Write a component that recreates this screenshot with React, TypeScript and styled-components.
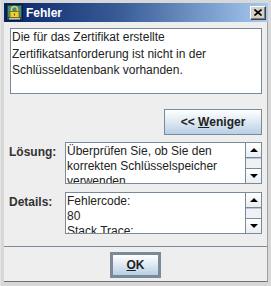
import React from 'react';
import styled, { createGlobalStyle } from 'styled-components';

const Global = createGlobalStyle`
  html, body { margin: 0; padding: 0; background: #d4d4d4; }
  body { font-family: "Liberation Sans", Arial, sans-serif; font-size: 12px; }
  * { box-sizing: border-box; }
`;

const Window = styled.div`
  width: 271px;
  height: 286px;
  background: #d8d8d8;
  padding: 3px 3px 4px 3px;
  display: flex;
  flex-direction: column;
  border-left: 1px solid #e4e4e4;
`;

const TitleBar = styled.div`
  height: 19px;
  background: linear-gradient(to right, #0a246a 0%, #3a5e98 45%, #a6caf0 100%);
  display: flex;
  align-items: center;
  padding: 0 2px 0 2px;
  gap: 3px;
`;

const Title = styled.span`
  color: #fff;
  font-weight: bold;
  font-size: 12px;
  flex: 1;
`;

const CloseButton = styled.div`
  width: 16px;
  height: 14px;
  background: #d4d0c8;
  border-top: 1px solid #fff;
  border-left: 1px solid #fff;
  border-right: 1px solid #404040;
  border-bottom: 1px solid #404040;
  box-shadow: inset -1px -1px 0 #808080;
  display: flex;
  align-items: center;
  justify-content: center;
`;

const Body = styled.div`
  flex: 1;
  background: #eeeeee;
  display: flex;
  flex-direction: column;
  border-right: 1px solid #a0a0a0;
  border-bottom: 1px solid #707070;
  padding-top: 6px;
`;

const Inner = styled.div`
  display: flex;
  flex-direction: column;
  padding: 0 5px 0 6px;
`;

const MessageBox = styled.div`
  height: 66px;
  background: #fff;
  border: 1px solid #7a8a99;
  padding: 0 1px;
  color: #222;
  font-size: 12px;
  line-height: 16.5px;
`;

const ToggleRow = styled.div`
  display: flex;
  justify-content: flex-end;
  margin-top: 15px;
`;

const Button = styled.div<{ $default?: boolean; $w: number }>`
  width: ${(p) => p.$w}px;
  height: 26px;
  border: ${(p) => (p.$default ? '3px' : '1px')} solid #7a8a99;
  background: linear-gradient(to bottom, #ffffff 0%, #e4edf6 40%, #b8cfe5 100%);
  display: flex;
  align-items: center;
  justify-content: center;
  font-weight: bold;
  font-size: 12px;
  color: #222;
`;

const Mnemonic = styled.span`
  text-decoration: underline;
`;

const DetailGrid = styled.div`
  display: grid;
  grid-template-columns: 55px 1fr;
  row-gap: 8px;
  margin-top: 7px;
`;

const Label = styled.div`
  font-weight: bold;
  color: #333;
  padding-top: 3px;
  padding-left: 0;
  margin-left: -1px;
`;

const TextPane = styled.div`
  height: 42px;
  border: 1px solid #7a8a99;
  background: #fff;
  display: flex;
`;

const PaneText = styled.div`
  flex: 1;
  overflow: hidden;
  padding: 1px 2px 0 1px;
  line-height: 15px;
  color: #222;
`;

const ScrollBar = styled.div`
  width: 16px;
  border-left: 1px solid #7a8a99;
  display: flex;
  flex-direction: column;
  background: #eeeeee;
`;

const ArrowButton = styled.div`
  height: 15px;
  background: linear-gradient(to bottom, #ffffff, #e8eef4);
  display: flex;
  align-items: center;
  justify-content: center;
  border-bottom: 1px solid #7a8a99;
  &:last-child {
    border-bottom: none;
    border-top: 1px solid #7a8a99;
  }
`;

const Thumb = styled.div`
  flex: 1;
  background: #eef2f6;
  border-top: 1px solid #b8c8d8;
`;

const Separator = styled.div`
  height: 1px;
  background: #7a8a99;
  margin-top: 12px;
`;

const Footer = styled.div`
  display: flex;
  justify-content: center;
  margin-top: 5px;
`;

const LockIcon = () => (
  <svg width="17" height="17" viewBox="0 0 17 17">
    <rect x="0.5" y="0.5" width="16" height="16" fill="#1d4e5e" stroke="#101830" />
    <rect x="2" y="2" width="13" height="11" fill="#3f8f7f" />
    <path d="M5.5 8 V5.5 a3 3 0 0 1 6 0 V8" fill="none" stroke="#e0d060" strokeWidth="1.6" />
    <rect x="4" y="7.5" width="9" height="6" fill="#f0d030" stroke="#806010" strokeWidth="0.8" />
    <rect x="8" y="9.5" width="1" height="2" fill="#604000" />
    <rect x="3" y="14" width="11" height="1.5" fill="#c0c0c0" />
  </svg>
);

const CloseX = () => (
  <svg width="8" height="7" viewBox="0 0 8 7">
    <path d="M0.5 0.5 L7.5 6.5 M7.5 0.5 L0.5 6.5" stroke="#000" strokeWidth="1.6" />
  </svg>
);

const UpArrow = () => (
  <svg width="8" height="4" viewBox="0 0 8 4">
    <path d="M0 4 L4 0 L8 4 Z" fill="#000" />
  </svg>
);

const DownArrow = () => (
  <svg width="8" height="4" viewBox="0 0 8 4">
    <path d="M0 0 L8 0 L4 4 Z" fill="#000" />
  </svg>
);

const Pane: React.FC<{ lines: string[] }> = ({ lines }) => (
  <TextPane>
    <PaneText>
      {lines.map((l, i) => (
        <div key={i}>{l}</div>
      ))}
    </PaneText>
    <ScrollBar>
      <ArrowButton>
        <UpArrow />
      </ArrowButton>
      <Thumb />
      <ArrowButton>
        <DownArrow />
      </ArrowButton>
    </ScrollBar>
  </TextPane>
);

export default function App() {
  return (
    <>
      <Global />
      <Window>
        <TitleBar>
          <LockIcon />
          <Title>Fehler</Title>
          <CloseButton>
            <CloseX />
          </CloseButton>
        </TitleBar>
        <Body>
          <Inner>
            <MessageBox>
              Die für das Zertifikat erstellte
              <br />
              Zertifikatsanforderung ist nicht in der
              <br />
              Schlüsseldatenbank vorhanden.
            </MessageBox>
            <ToggleRow>
              <Button $w={98}>
                &lt;&lt;&nbsp;<Mnemonic>W</Mnemonic>eniger
              </Button>
            </ToggleRow>
            <DetailGrid>
              <Label>Lösung:</Label>
              <Pane lines={['Überprüfen Sie, ob Sie den', 'korrekten Schlüsselspeicher', 'verwenden.']} />
              <Label>Details:</Label>
              <Pane lines={['Fehlercode:', '80', 'Stack Trace:', 'java.lang.Exception']} />
            </DetailGrid>
          </Inner>
          <Separator />
          <Footer>
            <Button $default $w={51}>
              <Mnemonic>O</Mnemonic>K
            </Button>
          </Footer>
        </Body>
      </Window>
    </>
  );
}
